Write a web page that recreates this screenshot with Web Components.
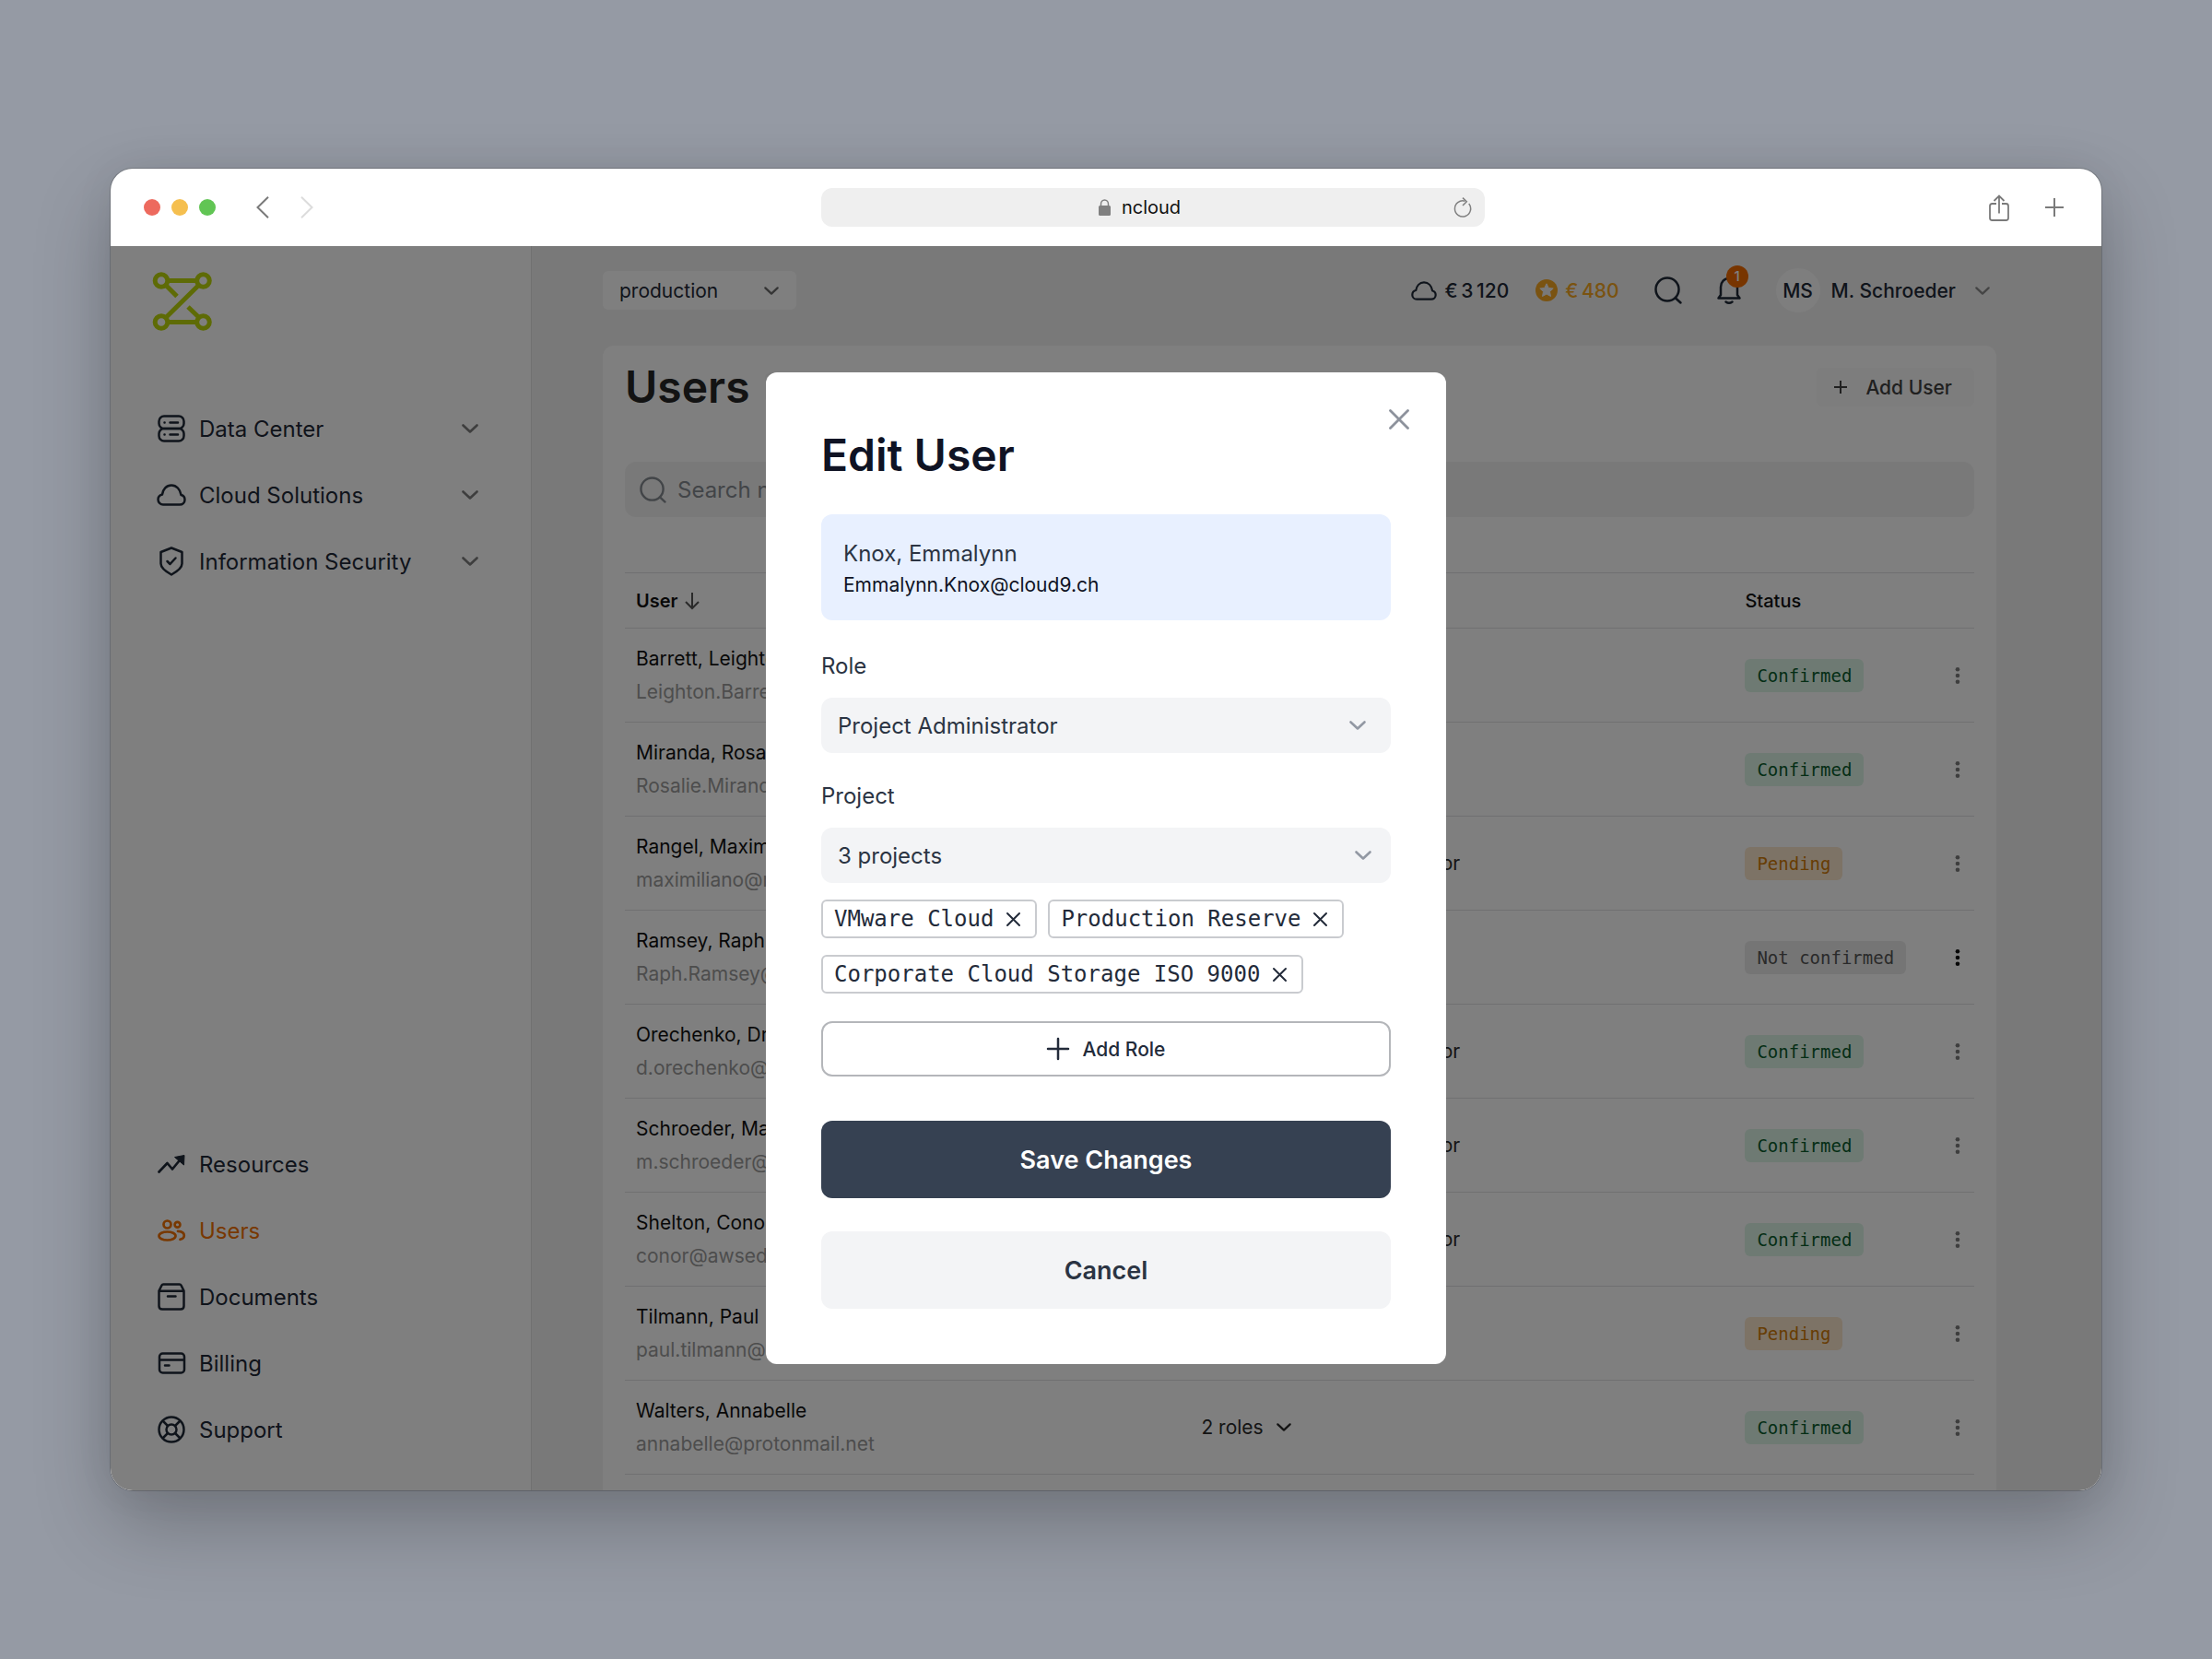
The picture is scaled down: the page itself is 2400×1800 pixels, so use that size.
<!DOCTYPE html>
<html lang="en">
<head>
<meta charset="utf-8">
<title>ncloud – Users</title>
<style>
  html, body { margin: 0; height: 100%; }
  body {
    box-sizing: border-box;
    min-height: 100vh;
    padding: 183px 5%;
    display: flex;
    background: #959aa4;
    font-family: Inter, "Liberation Sans", sans-serif;
    font-size: 21px;
    color: #1f2937;
  }
  browser-window { flex: 1; min-width: 0; }
</style>
</head>
<body>
<browser-window>
  <users-app></users-app>
</browser-window>

<script>
const ICONS = {
  logo: [64, 64, '<g fill="none" stroke="currentColor" stroke-width="5"><circle cx="9" cy="9.500" r="6.800"/><circle cx="54.500" cy="9.500" r="6.800"/><circle cx="9" cy="54.500" r="6.800"/><circle cx="54.500" cy="54.500" r="6.800"/><path d="M16 9.500h31.500M16 54.500h31.500M49.500 14.500 14 49.500M14 14.500l12 12M38 38l12 11.500"/></g>'],
  server: [30, 30, '<g fill="none" stroke="currentColor" stroke-width="2.500" stroke-linecap="round"><rect x="1.500" y="1.500" width="27" height="13.500" rx="5.500"/><rect x="1.500" y="15" width="27" height="13.500" rx="5.500"/><path d="M7.500 8.500h.1M13.500 8.500h8.500M7.500 21.500h.1M13.500 21.500h8.500"/></g>'],
  cloud: [32, 24, '<path d="M7 22.500h18c3 0 5.500-2.300 5.500-5.300 0-2.500-1.500-4.600-4-5.200C25.500 6 21.500 1.500 16 1.500S6.800 6 6 11.500c-2.700.7-4.500 3-4.500 5.600 0 3 2.500 5.400 5.500 5.400z" fill="none" stroke="currentColor" stroke-width="2.500" stroke-linejoin="round"/>'],
  shield: [30, 32, '<g fill="none" stroke="currentColor" stroke-width="2.500" stroke-linejoin="round" stroke-linecap="round"><path d="M15 1.500 3.500 6v12.500C3.500 23.500 10.500 28 15 30.500c4.500-2.500 11.500-7 11.500-12V6z"/><path d="m10.500 16 3 3 6-6.500"/></g>'],
  trend: [30, 20, '<path d="M1.500 18.500 10.500 9l5.500 6.500L25.500 4" fill="none" stroke="currentColor" stroke-width="2.700" stroke-linecap="round" stroke-linejoin="round"/><path d="m18.500 2.500 10.500-2-.5 10.500z" fill="currentColor" stroke="currentColor" stroke-linejoin="round"/>'],
  users: [30, 24, '<g fill="none" stroke="currentColor" stroke-width="2.700" stroke-linecap="round"><circle cx="10.500" cy="5.500" r="4"/><circle cx="21.500" cy="5.800" r="2.900"/><ellipse cx="10.500" cy="18" rx="9" ry="4.500"/><path d="M22 12.800c4 .2 6.800 2 6.800 4.600 0 2.100-1.700 3.700-4.300 4.400"/></g>'],
  archive: [30, 30, '<g fill="none" stroke="currentColor" stroke-width="2.500" stroke-linejoin="round" stroke-linecap="round"><path d="M1.500 8.500 4.500 2.500Q5 1.500 6.200 1.500h17.600q1.200 0 1.700 1l3 6V25q0 3.500-3.500 3.500H5q-3.500 0-3.500-3.500zM1.500 8.700h27M11 14.500h8.500"/></g>'],
  card: [30, 24, '<g fill="none" stroke="currentColor" stroke-width="2.500" stroke-linecap="round"><rect x="2" y="1.500" width="27" height="21" rx="3.500"/><path d="M2.500 8.500h26M8 14.500h4.500"/></g>'],
  buoy: [30, 30, '<g fill="none" stroke="currentColor" stroke-width="2.500"><circle cx="15" cy="15" r="13.500"/><circle cx="15" cy="15" r="5.500"/><path d="m5.500 5.500 5.500 5.500M24.500 5.500 19 11M5.500 24.500 11 19M24.500 24.500 19 19"/></g>'],
  chevron: [18, 10, '<path d="m1.500 1.500 7.500 7 7.500-7" fill="none" stroke="currentColor" stroke-width="2.600" stroke-linecap="round" stroke-linejoin="round"/>'],
  back: [14, 24, '<path d="M13 .8 1.500 12 13 23.200" fill="none" stroke="currentColor" stroke-width="2"/>'],
  forward: [14, 24, '<path d="M1 .8 12.500 12 1 23.200" fill="none" stroke="currentColor" stroke-width="2"/>'],
  lock: [13, 18, '<rect y="7" width="13" height="11" rx="1.500" fill="currentColor"/><path d="M2.500 8V5.500c0-2.500 1.600-4.500 4-4.500s4 2 4 4.500V8" fill="none" stroke="currentColor" stroke-width="1.500"/>'],
  reload: [20, 22, '<path d="M12.500 4.200a8.600 8.600 0 1 0 4.200 2.800" fill="none" stroke="currentColor" stroke-width="1.500"/><path d="m10 .6 4.300 4.200L10 9" fill="none" stroke="currentColor" stroke-width="1.500"/>'],
  share: [22, 29, '<path d="M8 10H3.500Q1 10 1 12.500v13Q1 28 3.500 28h15q2.500 0 2.500-2.500v-13Q21 10 18.500 10H14M11 20.500V1.500M5.500 7 11 1.500 16.500 7" fill="none" stroke="currentColor" stroke-width="1.800"/>'],
  plus: [24, 24, '<path d="M12 1v22M1 12h22" fill="none" stroke="currentColor" stroke-width="2.500" stroke-linecap="round"/>'],
  tabplus: [20, 20, '<path d="M10 0v20M0 10h20" stroke="currentColor" stroke-width="2"/>'],
  smallplus: [14, 14, '<path d="M7 0v14M0 7h14" stroke="currentColor" stroke-width="2"/>'],
  star: [24, 24, '<circle cx="12" cy="12" r="12" fill="currentColor"/><path d="m12 4.800 2.200 4.600 5 .6-3.700 3.500 1 5-4.500-2.500-4.500 2.500 1-5L4.800 10l5-.6z" fill="#f2f2f2" stroke="#f2f2f2" stroke-linejoin="round"/>'],
  search: [30, 30, '<circle cx="14" cy="14" r="12.500" fill="none" stroke="currentColor" stroke-width="2.500"/><path d="m23 23.500 5.500 5" stroke="currentColor" stroke-width="2.500" stroke-linecap="round"/>'],
  bell: [26, 30, '<g fill="none" stroke="currentColor" stroke-width="2.500" stroke-linejoin="round" stroke-linecap="round"><path d="M1.500 23.500 4 20v-8.500C4 6 8 2 13 2s9 4 9 9.500V20l2.500 3.500z"/><path d="M9.500 27.500c2 1.500 5 1.500 7 0"/></g>'],
  close: [22, 22, '<path d="m1.500 1.500 19 19M20.500 1.500l-19 19" stroke="currentColor" stroke-width="2.800" stroke-linecap="round"/>'],
  remove: [15, 15, '<path d="m1 1 13 13M14 1 1 14" stroke="currentColor" stroke-width="2" stroke-linecap="round"/>'],
  sort: [16, 18, '<path d="M8 0v16.500M1 10l7 7 7-7" fill="none" stroke="currentColor" stroke-width="2"/>'],
  more: [6, 18, '<g fill="currentColor"><circle cx="3" cy="2.300" r="2.300"/><circle cx="3" cy="9" r="2.300"/><circle cx="3" cy="15.700" r="2.300"/></g>']
};

const RESET = `
  *, *::before, *::after { box-sizing: border-box; }
  button, select, input { font: inherit; color: inherit; background: none; border: 0; padding: 0; margin: 0; appearance: none; outline: 0; }
  button { cursor: pointer; display: flex; align-items: center; justify-content: center; }
  h1, h2, p { margin: 0; }
  a { color: inherit; text-decoration: none; }
`;

class Base extends HTMLElement {
  connectedCallback() {
    if (this.shadowRoot) return;
    this.attachShadow({ mode: 'open' }).innerHTML = `<style>${RESET}${this.css()}</style>${this.html()}`;
  }
  css() { return ':host{display:block}'; }
  html() { return '<slot></slot>'; }
}

customElements.define('ui-icon', class extends Base {
  css() { return ':host{display:inline-flex;flex:none} svg{display:block;overflow:visible}'; }
  html() {
    const [w, h, body] = ICONS[this.getAttribute('name')];
    const width = +(this.getAttribute('width') || w);
    return `<svg width="${width}" height="${Math.round(h * width / w)}" viewBox="0 0 ${w} ${h}" aria-hidden="true">${body}</svg>`;
  }
});

customElements.define('browser-window', class extends Base {
  css() { return `
    :host { display: flex; flex-direction: column; min-height: 0; border-radius: 24px; overflow: hidden; background: #fff;
      box-shadow: 0 0 0 1px rgba(0,0,0,.18), 0 0 45px rgba(0,0,0,.06), 0 36px 84px rgba(0,0,0,.24); }
    ::slotted(*) { flex: 1; min-height: 0; }`; }
  html() { return '<browser-bar></browser-bar><slot></slot>'; }
});

customElements.define('browser-bar', class extends Base {
  css() { return `
    :host { display: grid; grid-template-columns: 1fr 1fr 1fr; align-items: center; height: 84px; padding: 0 41px 0 36px; color: #7a7a7a; }
    .left, .right { display: flex; align-items: center; }
    .lights { display: flex; gap: 12px; margin-right: 44px; }
    .lights i { width: 18px; height: 18px; border-radius: 50%; background: #ed6a5e; }
    .lights i:nth-child(2) { background: #f5bf4f; }
    .lights i:nth-child(3) { background: #61c554; }
    .left button + button { margin-left: 34px; color: #dcdcdc; }
    .right { justify-content: flex-end; gap: 39px; }
    .url { display: flex; align-items: center; width: 720px; justify-self: center; height: 42px; border-radius: 12px; background: #efefef; padding: 0 14px 0 5px; color: #808080; margin-left: 107px; }
    .addr { flex: 1; display: flex; justify-content: center; align-items: center; gap: 12px; font-size: 20px; }
    .addr span { color: #111; }`; }
  html() { return `
    <div class="left">
      <div class="lights"><i></i><i></i><i></i></div>
      <button aria-label="Back"><ui-icon name="back"></ui-icon></button>
      <button aria-label="Forward"><ui-icon name="forward"></ui-icon></button>
    </div>
    <div class="url"><div class="addr"><ui-icon name="lock"></ui-icon><span>ncloud</span></div>
      <button aria-label="Reload"><ui-icon name="reload"></ui-icon></button></div>
    <div class="right">
      <button aria-label="Share"><ui-icon name="share"></ui-icon></button>
      <button aria-label="New tab"><ui-icon name="tabplus"></ui-icon></button>
    </div>`; }
});

customElements.define('users-app', class extends Base {
  css() { return `
    :host { display: flex; position: relative; overflow: hidden; }
    side-nav { flex: none; width: 457px; }
    main { flex: 1; min-width: 0; display: flex; flex-direction: column; padding: 24px 114px 0 77px; background: #f2f2f2; }
    users-panel { flex: 1; min-height: 0; margin-top: 36px; }
    .overlay { position: absolute; inset: 0; display: flex; align-items: center; justify-content: center; background: rgba(0,0,0,.5); }`; }
  html() { return `
    <side-nav></side-nav>
    <main><top-bar></top-bar><users-panel></users-panel></main>
    <div class="overlay"><edit-dialog></edit-dialog></div>`; }
});

customElements.define('nav-item', class extends Base {
  css() { return `
    :host { display: block; font-size: 24px; }
    :host([active]) { color: #f07000; }
    a { display: flex; align-items: center; height: 72px; }
    .ico { display: flex; justify-content: center; width: 30px; margin-right: 15px; }
    .caret { margin-left: auto; color: #7c7c7c; }`; }
  html() { return `<a href="#"><span class="ico"><ui-icon name="${this.getAttribute('icon')}"></ui-icon></span><slot></slot>${
    this.hasAttribute('expandable') ? '<ui-icon class="caret" name="chevron"></ui-icon>' : ''}</a>`; }
});

customElements.define('side-nav', class extends Base {
  css() { return `
    :host { display: flex; flex-direction: column; background: #fff; border-right: 1px solid #e2e2e2; padding: 28px 57px 30px 51px; }
    .logo { color: #bcd60c; align-self: flex-start; margin: 0 0 70px -5px; }
    nav { display: flex; flex-direction: column; flex: 1; }
    .gap { flex: 1; }`; }
  html() { return `
    <ui-icon class="logo" name="logo"></ui-icon>
    <nav>
      <nav-item icon="server" expandable>Data Center</nav-item>
      <nav-item icon="cloud" expandable>Cloud Solutions</nav-item>
      <nav-item icon="shield" expandable>Information Security</nav-item>
      <div class="gap"></div>
      <nav-item icon="trend">Resources</nav-item>
      <nav-item icon="users" active>Users</nav-item>
      <nav-item icon="archive">Documents</nav-item>
      <nav-item icon="card">Billing</nav-item>
      <nav-item icon="buoy">Support</nav-item>
    </nav>`; }
});

customElements.define('top-bar', class extends Base {
  css() { return `
    :host { display: flex; align-items: center; height: 48px; padding-right: 7px; }
    .env { display: grid; align-items: center; width: 210px; height: 42px; border-radius: 6px; background: #fff; }
    .env > * { grid-area: 1 / 1; }
    .env select { height: 42px; padding-left: 18px; }
    .env ui-icon { justify-self: end; margin-right: 19px; color: #6b6b6b; pointer-events: none; }
    .tools { margin-left: auto; display: flex; align-items: center; gap: 38px; font-weight: 500; }
    .money { display: flex; align-items: center; gap: 8px; }
    .bonus { color: #f5a623; margin-left: -9px; }
    .bell { position: relative; }
    .count { position: absolute; left: 10px; top: -12px; width: 24px; height: 24px; border-radius: 50%; background: #f06a00; color: #fff; font-size: 15px; line-height: 24px; text-align: center; }
    .me { gap: 12px; font-weight: 500; }
    .avatar { width: 48px; height: 48px; border-radius: 50%; background: #fdfdfd; display: flex; align-items: center; justify-content: center; }
    .me ui-icon { margin-left: 9px; color: #8a8a8a; }`; }
  html() { return `
    <div class="env"><select aria-label="Environment"><option>production</option></select><ui-icon name="chevron" width="16"></ui-icon></div>
    <div class="tools">
      <span class="money"><ui-icon name="cloud" width="28"></ui-icon><span>€&thinsp;3&thinsp;120</span></span>
      <span class="money bonus"><ui-icon name="star"></ui-icon><span>€&thinsp;480</span></span>
      <button aria-label="Search"><ui-icon name="search"></ui-icon></button>
      <button class="bell" aria-label="Notifications"><ui-icon name="bell"></ui-icon><span class="count">1</span></button>
      <button class="me"><span class="avatar">MS</span><span>M. Schroeder</span><ui-icon name="chevron" width="16"></ui-icon></button>
    </div>`; }
});

customElements.define('users-panel', class extends Base {
  css() { return `
    :host { display: block; overflow: hidden; background: #fff; border-radius: 12px 12px 0 0; padding: 24px 24px 0; }
    header { display: flex; align-items: center; height: 42px; }
    h1 { font-size: 48px; font-weight: 600; line-height: 42px; color: #262626; }
    .total { width: 48px; height: 33px; margin-left: 16px; border-radius: 6px; background: #f7f7f7; }
    .add { margin-left: auto; height: 42px; padding: 0 24px 0 19px; gap: 20px; border-radius: 6px; background: #fafafa; font-weight: 500; color: #404040; }
    .search { display: flex; align-items: center; gap: 12px; height: 60px; margin: 60px 0; padding: 0 16px; border-radius: 12px; background: #f3f3f3; color: #858a90; font-size: 24px; }
    .search input { flex: 1; min-width: 0; }
    .search input::placeholder { color: #858a90; opacity: 1; }`; }
  html() { return `
    <header><h1>Users</h1><span class="total"></span><button class="add"><ui-icon name="smallplus"></ui-icon>Add User</button></header>
    <label class="search"><ui-icon name="search" width="29"></ui-icon><input type="search" aria-label="Search" placeholder="Search name"></label>
    <user-table></user-table>`; }
});

customElements.define('status-badge', class extends Base {
  css() { return `
    :host { display: inline-block; height: 36px; line-height: 36px; padding: 0 13px; border-radius: 6px; font-family: "DejaVu Sans Mono", monospace; font-size: 19px; vertical-align: middle; white-space: nowrap; background: #dcf5e6; color: #0a5c2c; }
    :host([kind="pending"]) { background: #fbe6cc; color: #cf7a08; }
    :host([kind="none"]) { background: #eaeaea; color: #555; }`; }
});

const ROWS = [
  ['Barrett, Leighton', 'Leighton.Barrett', '', 'ok'],
  ['Miranda, Rosalie', 'Rosalie.Miranda', '', 'ok'],
  ['Rangel, Maximiliano', 'maximiliano@rangel', 'Cloud Storage Administrator', 'pending'],
  ['Ramsey, Raph', 'Raph.Ramsey@cloud', '', 'none'],
  ['Orechenko, Dmitri', 'd.orechenko@cloud', 'Cloud Storage Administrator', 'ok'],
  ['Schroeder, Maria', 'm.schroeder@cloud', 'Cloud Storage Administrator', 'ok'],
  ['Shelton, Conor', 'conor@awsed', 'Cloud Storage Administrator', 'ok'],
  ['Tilmann, Paul', 'paul.tilmann@web', '', 'pending'],
  ['Walters, Annabelle', 'annabelle@protonmail.net', '2 roles', 'ok']
];
const STATUS = { ok: 'Confirmed', pending: 'Pending', none: 'Not confirmed' };

customElements.define('user-table', class extends Base {
  css() { return `
    table { width: 100%; table-layout: fixed; border-collapse: separate; border-spacing: 0; border-top: 1px solid #e0e0e2; }
    .c1 { width: 41.9%; } .c2 { width: 40.3%; } .c4 { width: 36px; }
    th { height: 60px; padding: 0 12px; text-align: left; font-weight: 500; font-size: 20px; color: #111; border-bottom: 1px solid #e0e0e2; }
    th:first-child { font-weight: 600; }
    th button { font-weight: inherit; gap: 8px; color: #111; }
    th ui-icon { color: #555; }
    td { height: 102px; padding: 0 12px; border-bottom: 1px solid #e0e0e2; line-height: 36px; white-space: nowrap; color: #2a2a2a; }
    td p:first-child { color: #111; }
    td p + p { color: #9a9a9a; }
    .roles { gap: 14px; }
    .act { padding: 0; color: #7c7c7c; }
    .act button { width: 36px; height: 36px; }
    .dark { color: #111; }`; }
  html() { return `<table><colgroup><col class="c1"><col class="c2"><col><col class="c4"></colgroup>
    <thead><tr><th><button>User<ui-icon name="sort"></ui-icon></button></th><th></th><th>Status</th><th></th></tr></thead>
    <tbody>${ROWS.map(([n, e, r, s]) => `<tr><td><p>${n}</p><p>${e}</p></td>
      <td>${/^\d/.test(r) ? `<button class="roles">${r}<ui-icon name="chevron" width="16"></ui-icon></button>` : r}</td>
      <td><status-badge kind="${s}">${STATUS[s]}</status-badge></td>
      <td class="act ${s === 'none' ? 'dark' : ''}"><button aria-label="Actions"><ui-icon name="more"></ui-icon></button></td></tr>`).join('')}</tbody></table>`; }
});

customElements.define('select-field', class extends Base {
  css() { return `
    :host { display: block; font-size: 24px; color: #2b3443; }
    label { display: block; line-height: 36px; margin-bottom: 16px; }
    .box { display: grid; align-items: center; height: 60px; border-radius: 12px; background: #f3f4f6; }
    .box > * { grid-area: 1 / 1; }
    select { width: 100%; height: 60px; padding-left: 18px; }
    ui-icon { justify-self: end; margin-right: var(--caret-inset, 27px); color: #9298a3; pointer-events: none; }`; }
  html() { return `<label for="f">${this.getAttribute('label')}</label>
    <div class="box"><select id="f"><option>${this.getAttribute('value')}</option></select><ui-icon name="chevron"></ui-icon></div>`; }
});

customElements.define('project-chip', class extends Base {
  css() { return `
    :host { display: inline-flex; align-items: center; gap: 14px; height: 42px; padding: 0 16px 0 12px; border: 2px solid #c9cbcf; border-radius: 6px; font-family: "DejaVu Sans Mono", monospace; font-size: 24px; white-space: nowrap; color: #232b3a; }`; }
  html() { return '<slot></slot><button aria-label="Remove"><ui-icon name="remove"></ui-icon></button>'; }
});

customElements.define('edit-dialog', class extends Base {
  css() { return `
    :host { display: block; width: 738px; padding: 39px 39px 60px 60px; border-radius: 12px; background: #fff; color: #2b3443; }
    .close { margin-left: auto; width: 24px; height: 24px; color: #8d929c; }
    form { margin-right: 21px; }
    h2 { font-size: 48px; font-weight: 600; line-height: 54px; color: #0f1324; }
    .person { margin: 37px 0 32px; padding: 25px 24px 23px; border-radius: 12px; background: #e8f0ff; }
    .person p { font-size: 24px; line-height: 36px; }
    .person p + p { font-size: 21px; line-height: 31px; color: #0f1324; }
    select-field + select-field { margin-top: 29px; --caret-inset: 21px; }
    .chips { display: flex; flex-wrap: wrap; gap: 18px 12px; margin: 18px 0 30px; }
    form > button { width: 100%; border-radius: 12px; }
    .role { height: 60px; gap: 15px; border: 2px solid #b4b6ba; font-weight: 500; color: #232b3a; }
    .save, .cancel { height: 84px; font-size: 27px; font-weight: 600; }
    .save { margin: 48px 0 36px; background: #364152; color: #fff; }
    .cancel { background: #f3f4f6; }`; }
  html() { return `
    <button class="close" aria-label="Close"><ui-icon name="close"></ui-icon></button>
    <form onsubmit="return false">
      <h2>Edit User</h2>
      <div class="person"><p>Knox, Emmalynn</p><p>Emmalynn.Knox@cloud9.ch</p></div>
      <select-field label="Role" value="Project Administrator"></select-field>
      <select-field label="Project" value="3 projects"></select-field>
      <div class="chips">
        <project-chip>VMware Cloud</project-chip>
        <project-chip>Production Reserve</project-chip>
        <project-chip>Corporate Cloud Storage ISO 9000</project-chip>
      </div>
      <button class="role"><ui-icon name="plus"></ui-icon>Add Role</button>
      <button class="save">Save Changes</button>
      <button class="cancel">Cancel</button>
    </form>`; }
});
</script>
</body>
</html>
